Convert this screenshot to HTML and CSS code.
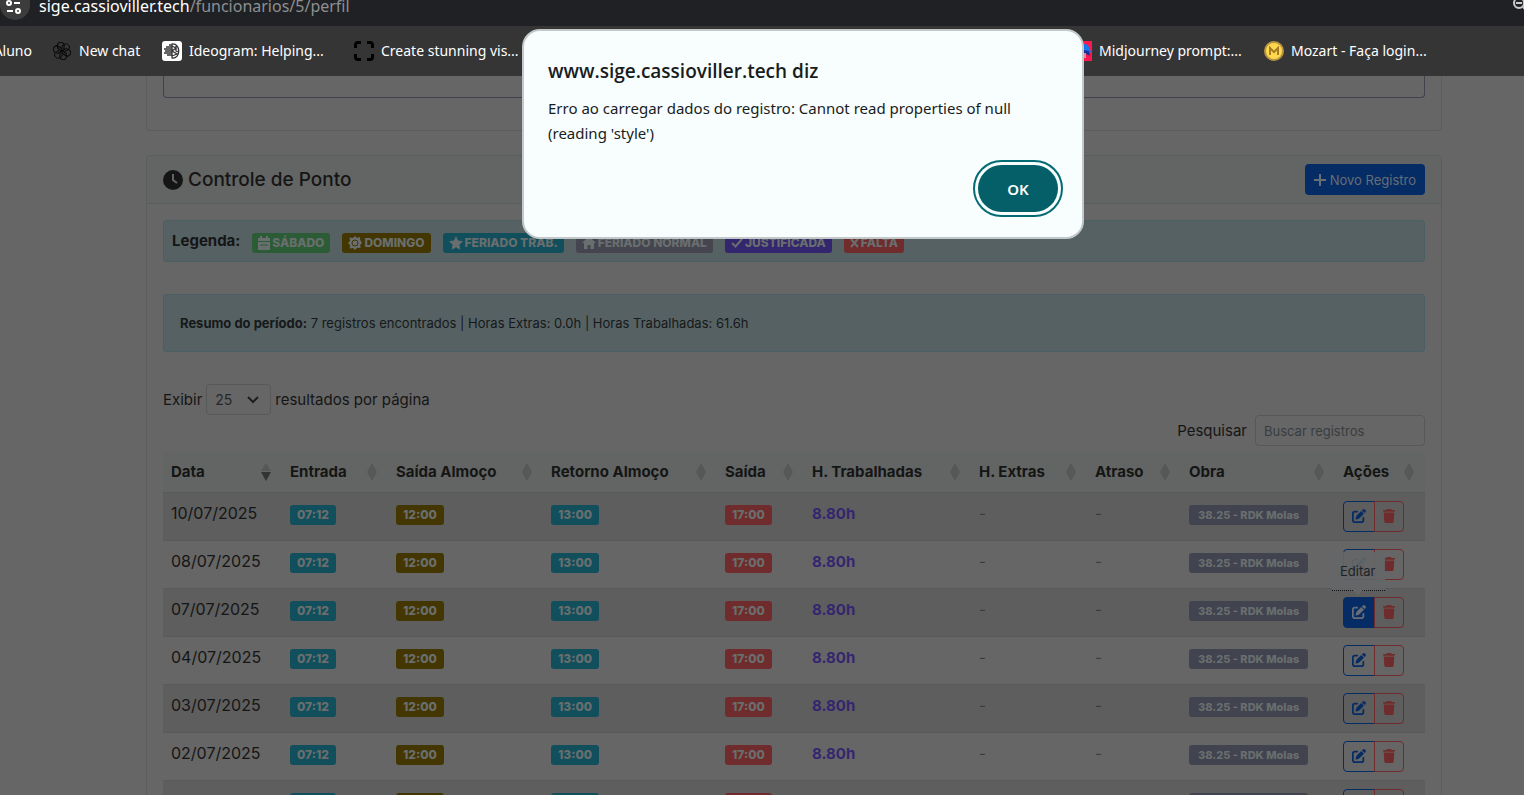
FILE: index.html
```html
<!DOCTYPE html>
<html lang="pt-BR">
<head>
<meta charset="utf-8">
<title>Controle de Ponto</title>
<link rel="stylesheet" href="styles.css">
</head>
<body>
<svg class="sprite" aria-hidden="true">
  <symbol id="edit" viewBox="0 0 512 512"><path d="M471.6 21.700c-21.900-21.900-57.300-21.900-79.200 0L362.300 51.700l97.900 97.900 30.100-30.100c21.900-21.900 21.900-57.300 0-79.200L471.600 21.700zM172.400 241.700c-6.100 6.100-10.800 13.600-13.500 21.900l-29.600 88.800c-2.900 8.600-.6 18.100 5.800 24.600s15.900 8.700 24.600 5.800l88.800-29.600c8.200-2.700 15.700-7.400 21.900-13.500L437.700 172.300 339.700 74.300 172.400 241.700zM96 64C43 64 0 107 0 160V416c0 53 43 96 96 96H352c53 0 96-43 96-96V320c0-17.700-14.300-32-32-32s-32 14.300-32 32v96c0 17.700-14.300 32-32 32H96c-17.700 0-32-14.300-32-32V160c0-17.700 14.300-32 32-32h96c17.700 0 32-14.300 32-32s-14.300-32-32-32H96z"/></symbol>
  <symbol id="trash" viewBox="0 0 448 512"><path d="M135.200 17.700L128 32H32C14.300 32 0 46.300 0 64S14.300 96 32 96H416c17.700 0 32-14.300 32-32s-14.300-32-32-32H320l-7.200-14.300C307.400 6.800 296.300 0 284.200 0H163.800c-12.100 0-23.200 6.800-28.600 17.700zM416 128H32L53.200 467c1.600 25.300 22.600 45 47.900 45H346.900c25.300 0 46.300-19.700 47.900-45L416 128z"/></symbol>
  <symbol id="sort" viewBox="0 0 10 18"><path d="M0 9 5 0l5 9-5 9z"/></symbol>
</svg>
<header class="browser">
  <div class="address">
    <span class="site-info"><svg width="18" height="16" viewBox="0 0 18 16" fill="none" stroke="#fff" stroke-width="2"><circle cx="4" cy="3" r="2"/><path d="M9 3h6M2 11h6"/><circle cx="13" cy="11" r="2"/></svg></span>
    <span class="url">sige.cassioviller.tech<span class="path">/funcionarios/5/perfil</span></span>
    <svg class="lens" width="16" height="16" viewBox="0 0 16 16" fill="none" stroke="#c9cbcd" stroke-width="2"><circle cx="7" cy="7" r="5"/><path d="M4 7h6M11 11l4 4"/></svg>
  </div>
  <nav class="bookmarks">
    <a class="first" href="#">Aluno</a>
    <a class="chat" href="#"><svg width="18" height="18" viewBox="0 0 18 18" fill="none" stroke="#080808" stroke-width="1"><g id="petal"><path d="M9 9V4l3-2c4-1 6 4 3 6l-4 2"/></g><use href="#petal" transform="rotate(60 9 9)"/><use href="#petal" transform="rotate(120 9 9)"/><use href="#petal" transform="rotate(180 9 9)"/><use href="#petal" transform="rotate(240 9 9)"/><use href="#petal" transform="rotate(300 9 9)"/></svg>New chat</a>
    <a href="#"><svg width="20" height="20" viewBox="0 0 20 20"><rect width="20" height="20" rx="3" fill="#fff"/><g fill="none" stroke="#333" stroke-width="1.300"><path d="M10 2.500v15M10 3c9-1 9 15 0 14M10 5l4 2-4 3 5 3-5 2M14 5v5l3 1M4 6h6M2 8h8M3 10h7M2 12h8M5 14h5M7 4h3"/></g></svg>Ideogram: Helping...</a>
    <a href="#"><svg width="20" height="20" viewBox="0 0 20 20" fill="none" stroke="#000" stroke-width="3"><path d="M1.500 7V4q0-2.500 2.500-2.500h3M13 1.500h3q2.500 0 2.500 2.500v3M18.500 13v3q0 2.500-2.500 2.500h-3M7 18.500H4q-2.500 0-2.500-2.500v-3"/></svg>Create stunning vis...</a>
    <a href="#"><svg width="20" height="20" viewBox="0 0 20 20"><path fill="#ff174f" d="M0 0h20v20H0z"/><path fill="#1678ee" d="M6 7Q12-1 17 6l2 5-2 2-5-3v4H6z"/><path fill="#18329a" d="m12 9 5 1 1 5-6-3z"/><path fill="#d78aa8" d="M10 12h4v5h-4z"/></svg>Midjourney prompt:...</a>
    <a href="#"><svg width="20" height="20" viewBox="0 0 20 20"><circle cx="10" cy="10" r="10" fill="#b89640"/><circle cx="10" cy="10" r="8" fill="#ffd850"/><path d="M6 14V7l4 4 4-4v7" fill="none" stroke="#a67d24" stroke-width="2"/></svg>Mozart - Faça login...</a>
  </nav>
</header>

<main class="page">
  <section class="card previous"><div class="chart-frame"></div></section>
  <section class="card">
    <div class="card-header">
      <h1><svg width="20" height="20" viewBox="0 0 20 20"><circle cx="10" cy="10" r="10" fill="#151515"/><path d="M10 4v6l4 3" fill="none" stroke="#626564" stroke-width="2"/></svg>Controle de Ponto</h1>
      <button class="new" type="button"><svg width="12" height="12" viewBox="0 0 12 12" stroke="#686d76" stroke-width="2"><path d="M6 0v12M0 6h12"/></svg>Novo Registro</button>
    </div>
    <div class="card-body">
      <div class="notice legend">
        <strong>Legenda:</strong>
        <span class="badge green"><svg width="12" height="14" viewBox="0 0 12 14"><path fill="currentColor" d="M2 0h2v2h4V0h2v2h2v3H0V2h2zM0 6h12v8H0z"/><path d="M2 9h8" stroke="#2c5c35"/></svg>SÁBADO</span>
        <span class="badge olive"><svg width="14" height="14" viewBox="0 0 14 14"><path fill="currentColor" d="m7 0 2 2 3-1 .2 3L14 7l-1.800 2 .3 3-3.500-.2L7 14l-2-2-3.300.4.200-3.400L0 7l2-2-.5-3.500L5 2z"/><circle cx="7" cy="7" r="3" fill="none" stroke="#443600"/></svg>DOMINGO</span>
        <span class="badge teal"><svg width="14" height="14" viewBox="0 0 14 14"><path fill="currentColor" d="m7 0 2 4.500 5 .7-3.600 3.500.9 5L7 11.300l-4.300 2.400.9-5L0 5.200l5-.7z"/></svg>FERIADO TRAB.</span>
        <span class="badge gray"><svg width="14" height="14" viewBox="0 0 14 14"><path fill="currentColor" d="m7 0 7 7h-2v6H8.500V9h-3v4H2V7H0z"/></svg>FERIADO NORMAL</span>
        <span class="badge purple"><svg width="12" height="12" viewBox="0 0 12 12"><path fill="none" stroke="currentColor" stroke-width="2" d="m1 6 3.500 3.500L11 2"/></svg>JUSTIFICADA</span>
        <span class="badge red"><svg width="9" height="10" viewBox="0 0 9 10"><path stroke="currentColor" stroke-width="2" d="m1 1 7 8M8 1 1 9"/></svg>FALTA</span>
      </div>
      <p class="notice summary"><strong>Resumo do período:</strong> 7 registros encontrados | Horas Extras: 0.0h | Horas Trabalhadas: 61.6h</p>
      <div class="length"><label for="count">Exibir</label>
        <span class="select-wrap"><select id="count"><option>25</option></select><svg width="12" height="8" viewBox="0 0 12 8" fill="none" stroke="#1d2023" stroke-width="2"><path d="m1 1 5 5 5-5"/></svg></span>
        <span>resultados por página</span></div>
      <div class="search"><label for="search">Pesquisar</label><input id="search" type="search" placeholder="Buscar registros"></div>
      <table>
        <colgroup><col class="c-date"><col class="c-in"><col class="c-lunch"><col class="c-back"><col class="c-out"><col class="c-hours"><col class="c-extra"><col class="c-late"><col class="c-site"><col class="c-actions"></colgroup>
        <thead><tr>
          <th><div>Data<svg class="sort" viewBox="0 0 10 18"><path d="M0 8 5 0l5 8z"/><path fill="#333" d="M0 9h10l-5 9z"/></svg></div></th>
          <th><div>Entrada<svg class="sort"><use href="#sort"/></svg></div></th>
          <th><div>Saída Almoço<svg class="sort"><use href="#sort"/></svg></div></th>
          <th><div>Retorno Almoço<svg class="sort"><use href="#sort"/></svg></div></th>
          <th><div>Saída<svg class="sort"><use href="#sort"/></svg></div></th>
          <th><div>H. Trabalhadas<svg class="sort"><use href="#sort"/></svg></div></th>
          <th><div>H. Extras<svg class="sort"><use href="#sort"/></svg></div></th>
          <th><div>Atraso<svg class="sort"><use href="#sort"/></svg></div></th>
          <th><div>Obra<svg class="sort"><use href="#sort"/></svg></div></th>
          <th><div>Ações<svg class="sort"><use href="#sort"/></svg></div></th>
        </tr></thead>
        <tbody>
          <tr><td>10/07/2025</td><td><span class="badge teal">07:12</span></td><td><span class="badge olive">12:00</span></td><td><span class="badge teal">13:00</span></td><td><span class="badge red">17:00</span></td><td><strong class="hours">8.80h</strong></td><td class="none">-</td><td class="none">-</td><td><span class="badge site">38.25 - RDK Molas</span></td><td><div class="actions"><button class="edit" type="button" aria-label="Editar"><svg><use href="#edit"/></svg></button><button class="delete" type="button" aria-label="Excluir"><svg><use href="#trash"/></svg></button></div></td></tr>
          <tr><td>08/07/2025</td><td><span class="badge teal">07:12</span></td><td><span class="badge olive">12:00</span></td><td><span class="badge teal">13:00</span></td><td><span class="badge red">17:00</span></td><td><strong class="hours">8.80h</strong></td><td class="none">-</td><td class="none">-</td><td><span class="badge site">38.25 - RDK Molas</span></td><td><div class="actions"><button class="edit" type="button" aria-label="Editar"><svg><use href="#edit"/></svg></button><button class="delete" type="button" aria-label="Excluir"><svg><use href="#trash"/></svg></button></div></td></tr>
          <tr><td>07/07/2025</td><td><span class="badge teal">07:12</span></td><td><span class="badge olive">12:00</span></td><td><span class="badge teal">13:00</span></td><td><span class="badge red">17:00</span></td><td><strong class="hours">8.80h</strong></td><td class="none">-</td><td class="none">-</td><td><span class="badge site">38.25 - RDK Molas</span></td><td><div class="actions"><button class="edit active" type="button" aria-label="Editar"><svg><use href="#edit"/></svg></button><button class="delete" type="button" aria-label="Excluir"><svg><use href="#trash"/></svg></button><span class="tooltip" role="tooltip">Editar</span></div></td></tr>
          <tr><td>04/07/2025</td><td><span class="badge teal">07:12</span></td><td><span class="badge olive">12:00</span></td><td><span class="badge teal">13:00</span></td><td><span class="badge red">17:00</span></td><td><strong class="hours">8.80h</strong></td><td class="none">-</td><td class="none">-</td><td><span class="badge site">38.25 - RDK Molas</span></td><td><div class="actions"><button class="edit" type="button" aria-label="Editar"><svg><use href="#edit"/></svg></button><button class="delete" type="button" aria-label="Excluir"><svg><use href="#trash"/></svg></button></div></td></tr>
          <tr><td>03/07/2025</td><td><span class="badge teal">07:12</span></td><td><span class="badge olive">12:00</span></td><td><span class="badge teal">13:00</span></td><td><span class="badge red">17:00</span></td><td><strong class="hours">8.80h</strong></td><td class="none">-</td><td class="none">-</td><td><span class="badge site">38.25 - RDK Molas</span></td><td><div class="actions"><button class="edit" type="button" aria-label="Editar"><svg><use href="#edit"/></svg></button><button class="delete" type="button" aria-label="Excluir"><svg><use href="#trash"/></svg></button></div></td></tr>
          <tr><td>02/07/2025</td><td><span class="badge teal">07:12</span></td><td><span class="badge olive">12:00</span></td><td><span class="badge teal">13:00</span></td><td><span class="badge red">17:00</span></td><td><strong class="hours">8.80h</strong></td><td class="none">-</td><td class="none">-</td><td><span class="badge site">38.25 - RDK Molas</span></td><td><div class="actions"><button class="edit" type="button" aria-label="Editar"><svg><use href="#edit"/></svg></button><button class="delete" type="button" aria-label="Excluir"><svg><use href="#trash"/></svg></button></div></td></tr>
          <tr><td>01/07/2025</td><td><span class="badge teal">07:12</span></td><td><span class="badge olive">12:00</span></td><td><span class="badge teal">13:00</span></td><td><span class="badge red">17:00</span></td><td><strong class="hours">8.80h</strong></td><td class="none">-</td><td class="none">-</td><td><span class="badge site">38.25 - RDK Molas</span></td><td><div class="actions"><button class="edit" type="button" aria-label="Editar"><svg><use href="#edit"/></svg></button><button class="delete" type="button" aria-label="Excluir"><svg><use href="#trash"/></svg></button></div></td></tr>
        </tbody>
      </table>
    </div>
  </section>
</main>

<dialog class="alert" open aria-labelledby="alert-title">
  <h2 id="alert-title">www.sige.cassioviller.tech diz</h2>
  <p>Erro ao carregar dados do registro: Cannot read properties of null (reading 'style')</p>
  <button class="ok" type="button">OK</button>
</dialog>
</body>
</html>
```
FILE: styles.css
```css
* { box-sizing: border-box; }
body {
  margin: 0;
  height: 100vh;
  overflow: hidden;
  display: flex;
  flex-direction: column;
  background: #666;
  color: #151515;
  font: 15px/24px Inter, sans-serif;
}
button, input, select { font: inherit; margin: 0; }
.sprite { position: absolute; width: 0; height: 0; }

.browser { flex: none; background: #353535; color: #fff; font-family: "Noto Sans", sans-serif; }
.address { height: 26px; display: flex; background: #202124; font-size: 16px; line-height: 12px; }
.site-info { width: 30px; height: 20px; margin-right: 9px; border-radius: 0 0 15px 15px; background: #3c3c3c; padding-left: 5px; }
.path { color: #8c8f92; }
.lens { margin: -4px -4px 0 auto; }
.bookmarks { height: 50px; display: grid; grid-template-columns: 32px 109px 192px 718px 192px 1fr; align-items: center; font-size: 14px; }
.bookmarks a { display: flex; align-items: center; gap: 7px; color: #fff; text-decoration: none; white-space: nowrap; }
.bookmarks a + a { padding-left: 21px; }
.bookmarks .chat { gap: 8px; }
.bookmarks .first { justify-content: flex-end; overflow: hidden; }

.page { flex: 1; min-height: 0; overflow: hidden; padding: 0 82px 0 146px; }
.card { border: 1px solid #5b5d5d; border-radius: 4px; }
.previous { border-top: 0; border-radius: 0 0 4px 4px; padding: 0 16px 32px; margin-bottom: 24px; }
.chart-frame { height: 22px; border: 1px solid #41424b; border-top: 0; border-radius: 0 0 4px 4px; }
.card-header { display: flex; justify-content: space-between; align-items: center; padding: 8px 16px; background: #626564; border-bottom: 1px solid #5b5d5d; }
h1 { margin: 0; display: flex; align-items: center; gap: 5px; font-size: 19px; line-height: 24px; font-weight: 500; }
.new { display: flex; align-items: center; gap: 4px; height: 31px; padding: 0 9px; border: 0; border-radius: 4px; background: #052c65; color: #686d76; font-size: 13px; }
.card-body { padding: 16px; }
.notice { margin: 0 0 32px; background: #566163; border: 1px solid #4a5e63; border-radius: 3px; }
.legend { display: flex; align-items: center; gap: 12px; height: 42px; padding: 0 8px; }
.legend strong { font-weight: 700; font-size: 15px; }
.legend .badge { margin-top: 3px; padding: 0 6px; }
.summary { padding: 16px; font-size: 13px; color: #15191a; }
.badge { display: inline-flex; align-items: center; gap: 2px; height: 20px; padding: 0 7px; border-radius: 3px; color: #696e6e; font-size: 12px; line-height: 20px; font-weight: 800; white-space: nowrap; }
.green { background: #2c5c35; }
.olive { background: #443600; }
.teal { background: #124f5c; }
.gray { background: #45454f; }
.purple { background: #33266f; }
.red { background: #702c2c; }
.site { padding: 0 9px; background: #41434f; font-size: 11px; }

.length { display: flex; align-items: center; gap: 4px; height: 31px; }
.select-wrap { position: relative; width: 65px; }
.select-wrap svg { position: absolute; right: 12px; top: 12px; pointer-events: none; }
select { display: block; width: 100%; height: 31px; padding: 0 8px; appearance: none; border: 1px solid #575858; border-radius: 4px; background: #666; color: #26282b; font-size: 14px; }
.search { display: flex; justify-content: flex-end; align-items: center; gap: 8px; margin-bottom: 6px; }
.search input { width: 170px; height: 31px; padding: 0 8px; border: 1px solid #575858; border-radius: 4px; background: #666; font-size: 13px; }
.search input::placeholder { color: #393d41; }

table { width: 100%; table-layout: fixed; border-collapse: separate; border-spacing: 0; }
.c-date { width: 119px; } .c-in { width: 106px; } .c-lunch { width: 155px; } .c-back { width: 174px; } .c-out { width: 87px; }
.c-hours { width: 167px; } .c-extra { width: 116px; } .c-late { width: 94px; } .c-site { width: 154px; } .c-actions { width: 90px; }
th { height: 41px; padding: 0 11px 0 8px; background: #626564; border-bottom: 1px solid #585a5b; text-align: left; font-weight: 700; white-space: nowrap; }
th div { display: flex; align-items: center; justify-content: space-between; }
.sort { flex: none; width: 10px; height: 18px; fill: #565858; }
td { height: 48px; padding: 8px; border-bottom: 1px solid #585a5b; vertical-align: top; line-height: 26px; white-space: nowrap; }
td:first-child { font-size: 16px; line-height: 24px; }
tbody tr:nth-child(odd) td { background: #5e5e5e; }
td .badge { margin-top: 4px; vertical-align: top; }
.hours { color: #33266f; }
.none { color: #393c3e; }
.actions { position: relative; display: flex; }
.actions button { height: 31px; padding: 0 0 2px; display: grid; place-items: center; background: transparent; }
.actions svg { width: 14px; height: 14px; fill: currentColor; }
.actions .edit { width: 32px; border: 1px solid #052c65; border-radius: 4px 0 0 4px; color: #052c65; }
.actions .delete { width: 30px; margin-left: -1px; border: 1px solid #702c2c; border-radius: 0 4px 4px 0; color: #702c2c; }
.actions .active { background: #052c65; color: #686d76; }
.tooltip { position: absolute; left: -11px; bottom: 37px; min-width: 53px; padding: 6px 8px; border-bottom: 1px dotted #111; background: #656667e8; color: #202326; font-size: 13px; }
.tooltip::after { content: ""; position: absolute; left: 21px; bottom: -5px; border: 5px solid transparent; border-top-color: #656667; border-bottom: 0; }

.alert { position: absolute; left: 522px; top: 29px; width: 562px; height: 210px; margin: 0; padding: 26px 24px 20px 24px; display: flex; flex-direction: column; border: 2px solid #c3c9ca; border-radius: 18px; background: #f8fefe; color: #191c1d; font-family: "Noto Sans", sans-serif; }
.alert h2 { margin: 0 0 11px; font-family: "Open Sans", sans-serif; font-size: 19px; line-height: 28px; font-weight: 600; }
.alert p { margin: 0; font-size: 15px; line-height: 25px; }
.ok { align-self: flex-end; margin-top: 19px; width: 80px; height: 47px; flex: none; border: 0; border-radius: 24px; background: #045f68; color: #fff; font-size: 15px; font-weight: 600; outline: 2px solid #046b75; outline-offset: 3px; }
```
